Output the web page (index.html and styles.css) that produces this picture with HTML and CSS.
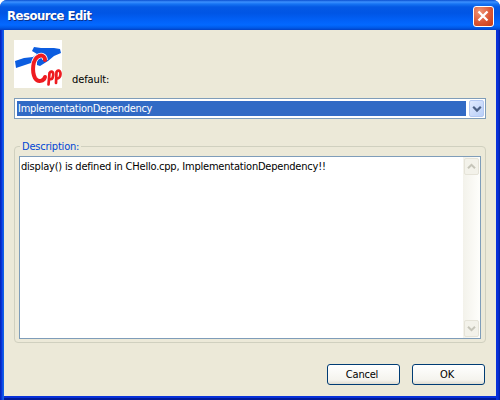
FILE: index.html
```html
<!DOCTYPE html>
<html lang="en">
<head>
<meta charset="utf-8">
<title>Resource Edit</title>
<link rel="stylesheet" href="styles.css">
</head>
<body>
<div class="window">
  <header class="titlebar">
    <h1 class="title">Resource Edit</h1>
    <button class="close" aria-label="Close">
      <svg width="21" height="21" viewBox="0 0 21 21"><path d="M5.5 5.5l9 9M14.5 5.5l-9 9" stroke="#fff" stroke-width="2.3"/></svg>
    </button>
  </header>
  <main class="client">
    <div class="resource">
      <svg class="logo" width="48" height="48" viewBox="0 0 48 48">
        <rect width="48" height="48" fill="#fff"/>
        <path d="M1 21L10 18L19 17L23 14L18 11L20 7L27 8L40 8L46 9L47 13L40 16L34 21L26 26L23 25V21L14 24L2 28Z" fill="#0c5de0"/>
        <path d="M31 20C31 16 28 15 25 16C18 19 18 32 21 38C24 43 30 41 31 37" fill="none" stroke="#fff" stroke-width="5.5"/>
        <path d="M31 20C31 16 28 15 25 16C18 19 18 32 21 38C24 43 30 41 31 37" fill="none" stroke="#ee1b20" stroke-width="4" stroke-linecap="round"/>
        <path d="M34.5 44.5L35.5 33C38 29.5 40.500 33 38.500 38C38 39.500 36 39.500 35 38.500M42 43L42.500 32C45 28.500 47.500 32 46 36.500C45 38.500 43.500 38.500 42.500 38" fill="none" stroke="#ee1b20" stroke-width="2.7" stroke-linecap="round"/>
      </svg>
      <span class="label">default:</span>
    </div>
    <div class="combo">
      <span class="combo-value"><span class="combo-text">ImplementationDependency</span></span>
      <span class="combo-arrow"><svg width="10" height="8" viewBox="0 0 10 8"><path d="M1.2 1.8L5 5.6L8.8 1.8" fill="none" stroke="#4d6185" stroke-width="2.2"/></svg></span>
    </div>
    <section class="group">
      <h2 class="legend"><span class="legend-text">Description:</span></h2>
      <div class="editor">
        <p class="editor-text">display() is defined in CHello.cpp, ImplementationDependency!!</p>
        <div class="scrollbar">
          <span class="scroll-button"><svg width="9" height="7" viewBox="0 0 9 7"><path d="M1 5.3L4.5 1.8L8 5.3" fill="none" stroke="#c6c5b9" stroke-width="2"/></svg></span>
          <span class="scroll-button"><svg width="9" height="7" viewBox="0 0 9 7"><path d="M1 1.7L4.5 5.2L8 1.7" fill="none" stroke="#c6c5b9" stroke-width="2"/></svg></span>
        </div>
      </div>
    </section>
    <footer class="actions">
      <button class="button">Cancel</button>
      <button class="button">OK</button>
    </footer>
  </main>
</div>
</body>
</html>
```
FILE: styles.css
```css
* { box-sizing: border-box; }
body {
  margin: 0;
  background: #fff;
  color: #000;
  font: 11px/13px "DejaVu Sans Condensed", "DejaVu Sans", sans-serif;
  font-stretch: condensed;
  font-variant-ligatures: none;
  letter-spacing: -0.21px;
}
h1, h2, p { margin: 0; font-size: inherit; font-weight: normal; }
button { font: inherit; color: inherit; letter-spacing: inherit; padding: 0; }
svg { display: block; }
.window {
  width: 500px;
  height: 400px;
  display: flex;
  flex-direction: column;
  border-radius: 7px 7px 0 0;
  overflow: hidden;
  background: linear-gradient(90deg, #001ea0 0, #0831d9 1px, #0831d9 2px, #166aee 3px, #0855dd 4px, #0831d9 496px, #0831d9 498px, #001ea0 500px);
}
.titlebar {
  height: 30px;
  flex: none;
  display: flex;
  align-items: center;
  justify-content: space-between;
  padding: 2px 6px 0 7px;
  background: linear-gradient(#0a4fd0 0, #3c91ff 2px, #1674f3 4px, #0459e4 7px, #0055e5 13px, #0262f9 21px, #0369ff 25px, #0058e6 28px, #0140c4 30px);
}
.title {
  color: #fff;
  font-size: 13px;
  line-height: 16px;
  font-weight: bold;
  letter-spacing: -0.5px;
  text-shadow: 1px 1px #0a318c;
  white-space: nowrap;
}
.close {
  width: 21px;
  height: 21px;
  border: 1px solid #fff;
  border-radius: 3px;
  background: radial-gradient(circle at 30% 25%, #ee9576, #dc5735 55%, #c63b15);
}
.close svg { margin: -1px; }
.client {
  height: 366px;
  margin: 0 4px;
  padding: 10px 10px 0;
  background: #ece9d8;
  box-shadow: 0 2px #0831d9, 0 4px #001a99;
}
.resource { display: flex; align-items: flex-end; gap: 10px; height: 48px; }
.label { margin-bottom: 2px; letter-spacing: -0.1px; }
.combo {
  display: flex;
  height: 21px;
  width: 472px;
  margin-top: 10px;
  padding: 1px;
  border: 1px solid #7f9db9;
  background: #fff;
}
.combo-value {
  flex: 1;
  margin: 1px 3px 1px 1px;
  padding-left: 1px;
  background: #316ac5;
  color: #fff;
  line-height: 16px;
  letter-spacing: -0.28px;
}
.combo-arrow {
  width: 15px;
  display: grid;
  place-items: center;
  border: 1px solid #b4c8f2;
  border-radius: 2px;
  background: linear-gradient(135deg, #e1eafe, #b9cff8);
}
.group {
  height: 197px;
  margin-top: 27px;
  padding: 0 4px;
  border: 1px solid #d0d0bf;
  border-radius: 4px;
}
.legend { height: 9px; display: flex; }
.legend-text {
  height: 13px;
  margin-top: -7px;
  margin-left: 1px;
  padding: 0 2px;
  background: #ece9d8;
  color: #0046d5;
}
.editor {
  display: flex;
  justify-content: space-between;
  height: 183px;
  border: 1px solid #7f9db9;
  background: #fff;
}
.editor-text { padding: 3px 0 0 1px; white-space: nowrap; }
.scrollbar {
  width: 17px;
  display: flex;
  flex-direction: column;
  justify-content: space-between;
  padding: 1px;
  background: linear-gradient(90deg, #f3f2eb, #fefefb);
}
.scroll-button {
  height: 17px;
  display: grid;
  place-items: center;
  border: 1px solid #e5e3d8;
  border-radius: 2px;
  background: #f3f2ea;
}
.actions { display: flex; justify-content: flex-end; gap: 12px; margin: 21px 1px 0 0; }
.button {
  width: 73px;
  height: 21px;
  padding-right: 3px;
  border: 1px solid #003c74;
  border-radius: 3px;
  background: linear-gradient(#fff, #f4f3ed 80%, #dfdcd0);
}
```
